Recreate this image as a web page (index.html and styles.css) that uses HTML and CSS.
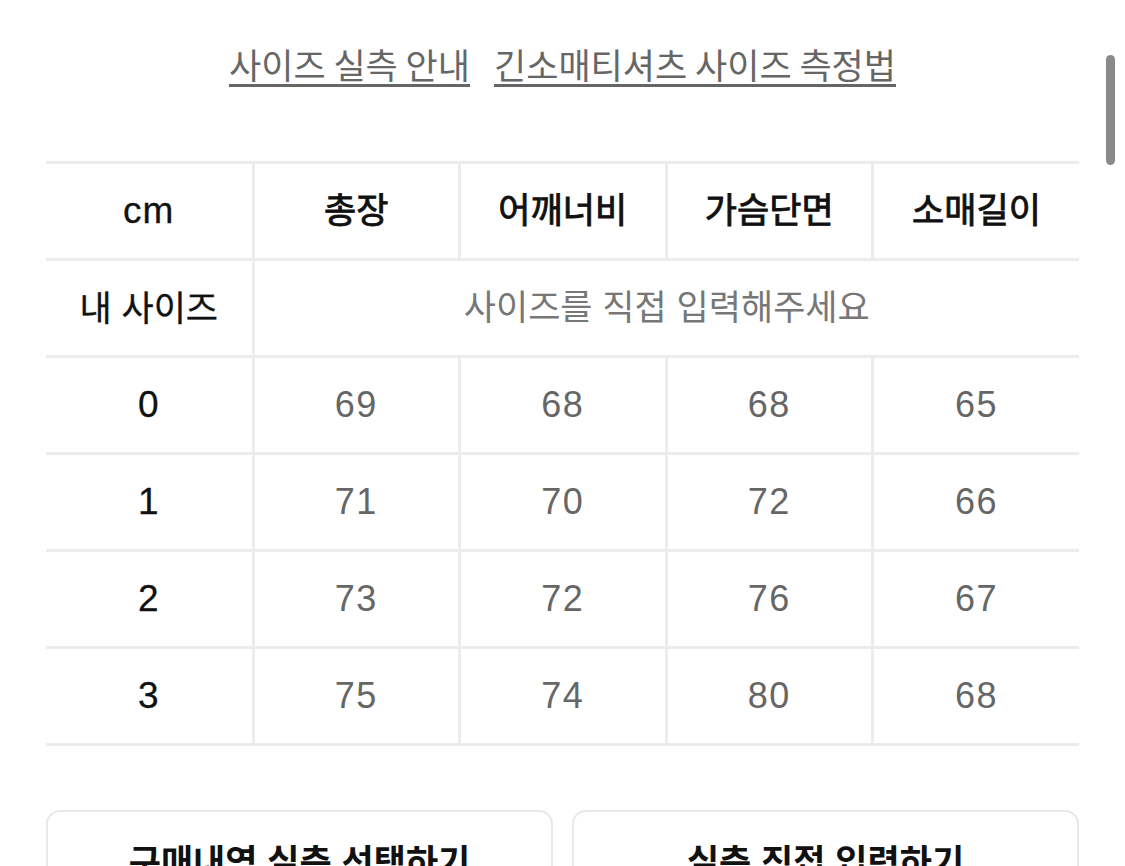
FILE: index.html
```html
<!DOCTYPE html>
<html lang="ko">
<head>
<meta charset="utf-8">
<title>사이즈 실측 안내</title>
<link rel="stylesheet" href="styles.css">
</head>
<body>
<div class="page">
  <nav class="links">
    <a class="link" href="#">사이즈 실측 안내</a>
    <a class="link" href="#">긴소매티셔츠 사이즈 측정법</a>
  </nav>

  <table class="size-table">
    <tbody>
      <tr class="head">
        <th class="label latin">cm</th>
        <th>총장</th>
        <th>어깨너비</th>
        <th>가슴단면</th>
        <th>소매길이</th>
      </tr>
      <tr>
        <th class="label korean">내 사이즈</th>
        <td class="placeholder" colspan="4">사이즈를 직접 입력해주세요</td>
      </tr>
      <tr>
        <th class="label latin">0</th>
        <td>69</td><td>68</td><td>68</td><td>65</td>
      </tr>
      <tr>
        <th class="label latin">1</th>
        <td>71</td><td>70</td><td>72</td><td>66</td>
      </tr>
      <tr>
        <th class="label latin">2</th>
        <td>73</td><td>72</td><td>76</td><td>67</td>
      </tr>
      <tr>
        <th class="label latin">3</th>
        <td>75</td><td>74</td><td>80</td><td>68</td>
      </tr>
    </tbody>
  </table>

  <div class="actions">
    <button class="action" type="button">구매내역 실측 선택하기</button>
    <button class="action" type="button">실측 직접 입력하기</button>
  </div>
</div>
<div class="scrollbar"></div>
</body>
</html>
```

FILE: styles.css
```css
* { box-sizing: border-box; }

html, body {
  margin: 0;
  padding: 0;
  background: #ffffff;
  height: 866px;
  overflow: hidden;
}

body {
  font-family: "Liberation Sans", "Noto Sans CJK KR", sans-serif;
  color: #111;
}

.page {
  padding: 0 46px;
}

.links {
  display: flex;
  justify-content: center;
  gap: 24px;
  padding-top: 42px;
  height: 161px;
}

.link {
  font-family: "Noto Sans CJK KR", sans-serif;
  font-size: 35px;
  line-height: 44px;
  color: #666;
  text-decoration: underline;
  text-decoration-thickness: 3px;
  text-underline-offset: 5px;
  word-spacing: -2px;
}

.size-table {
  width: 1033px;
  border-collapse: collapse;
  table-layout: fixed;
}

.size-table tr {
  height: 97px;
}

.size-table th,
.size-table td {
  border-top: 3px solid #ececec;
  border-left: 3px solid #ececec;
  text-align: center;
  vertical-align: middle;
  padding: 0;
}

.size-table tr:last-child th,
.size-table tr:last-child td {
  border-bottom: 3px solid #ececec;
}

.size-table .label {
  border-left: none;
  width: 207px;
  color: #111;
}

.size-table .label.latin {
  font-family: "Liberation Sans", sans-serif;
  font-weight: 400;
  font-size: 37px;
  letter-spacing: 1px;
  -webkit-text-stroke: 0.3px #111;
}

.size-table .label.korean {
  font-family: "Noto Sans CJK KR", sans-serif;
  font-weight: 400;
  font-size: 35px;
  padding-bottom: 6px;
  -webkit-text-stroke: 0.3px #111;
}

.size-table .head th:not(.label) {
  font-family: "Noto Sans CJK KR", sans-serif;
  font-weight: 400;
  font-size: 35px;
  color: #111;
  padding-bottom: 8px;
  -webkit-text-stroke: 0.9px #111;
}

.size-table td {
  font-family: "Liberation Sans", sans-serif;
  font-size: 36px;
  letter-spacing: 1.5px;
  color: #666;
}

.size-table td.placeholder {
  font-family: "Noto Sans CJK KR", sans-serif;
  font-size: 35px;
  letter-spacing: 0;
  color: #777;
  padding-bottom: 8px;
}

.actions {
  display: flex;
  gap: 19px;
  margin-top: 64px;
}

.action {
  flex: 1;
  height: 100px;
  background: #fff;
  border: 2px solid #e8e8e8;
  border-radius: 14px;
  font-family: "Noto Sans CJK KR", sans-serif;
  font-size: 35px;
  font-weight: 700;
  color: #111;
  padding: 22px 0 0;
  display: flex;
  justify-content: center;
  align-items: flex-start;
}

.scrollbar {
  position: absolute;
  top: 55px;
  left: 1106px;
  width: 9px;
  height: 110px;
  border-radius: 5px;
  background: #8a8a8a;
}
```
